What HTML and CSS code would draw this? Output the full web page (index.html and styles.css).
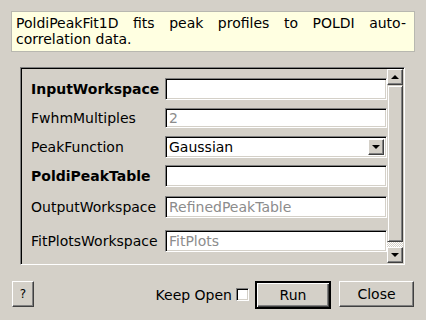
FILE: index.html
```html
<!DOCTYPE html>
<html>
<head>
<meta charset="utf-8">
<link rel="stylesheet" href="styles.css">
</head>
<body>
<div class="desc">PoldiPeakFit1D fits peak profiles to POLDI auto-correlation data.</div>
<div class="frame">
  <div class="content">
    <div class="row r1"><span class="label bold">InputWorkspace</span><div class="field"></div></div>
    <div class="row r2"><span class="label">FwhmMultiples</span><div class="field gray">2</div></div>
    <div class="row r3"><span class="label">PeakFunction</span><div class="field combo"><span class="ctext">Gaussian</span><span class="cbtn"><i class="tri-down"></i></span></div></div>
    <div class="row r4"><span class="label bold">PoldiPeakTable</span><div class="field"></div></div>
    <div class="row r5"><span class="label">OutputWorkspace</span><div class="field gray">RefinedPeakTable</div></div>
    <div class="row r6"><span class="label">FitPlotsWorkspace</span><div class="field gray">FitPlots</div></div>
  </div>
  <div class="sb">
    <div class="sb-btn"><i class="tri-up"></i></div>
    <div class="sb-handle"></div>
    <div class="sb-trough"></div>
    <div class="sb-btn"><i class="tri-down"></i></div>
  </div>
</div>
<div class="footer">
  <div class="btn help">?</div>
  <div class="spacer"></div>
  <span class="keep">Keep Open</span>
  <span class="check"></span>
  <div class="btn run">Run</div>
  <div class="btn close">Close</div>
</div>
</body>
</html>
```
FILE: styles.css
```css
html, body {
  margin: 0;
  padding: 0;
  background: #d4d0c8;
  font-family: "DejaVu Sans", sans-serif;
  font-size: 14px;
  color: #000;
}
body {
  width: 426px;
  height: 320px;
  overflow: hidden;
}
.desc {
  margin: 11px 11px 0 11px;
  height: 41px;
  box-sizing: border-box;
  border: 1px solid #b8b8b0;
  background: #ffffe1;
  padding: 3px 8px 0 4px;
  line-height: 16px;
  text-align: justify;
}
.frame {
  margin: 15px 0 0 20px;
  width: 385px;
  height: 198px;
  box-sizing: border-box;
  border: 1px solid;
  border-color: #808080 #ffffff #ffffff #808080;
  box-shadow: inset 1px 1px #000, inset -1px -1px #d4d0c8;
  padding: 1px;
  display: flex;
}
.content {
  flex: 1;
  overflow: hidden;
  padding: 9px 0 0 9px;
}
.row {
  display: flex;
  align-items: center;
  height: 22px;
}
.r2 { margin-top: 8px; height: 20px; }
.r3 { margin-top: 8px; }
.r4 { margin-top: 7px; }
.r5 { margin-top: 9px; }
.r6 { margin-top: 12px; }
.label {
  width: 134px;
  flex: none;
  white-space: nowrap;
}
.bold { font-weight: bold; }
.field {
  flex: 1;
  height: 100%;
  box-sizing: border-box;
  background: #fff;
  border: 1px solid;
  border-color: #808080 #ffffff #ffffff #808080;
  box-shadow: inset 1px 1px #000, inset -1px -1px #d4d0c8;
  padding: 0 0 0 3px;
  display: flex;
  align-items: center;
  white-space: nowrap;
}
.gray { color: #8c8c8c; }
.combo {
  padding: 2px 2px 2px 3px;
}
.ctext { flex: 1; }
.cbtn {
  width: 16px;
  height: 16px;
  box-sizing: border-box;
  background: #d4d0c8;
  border: 1px solid;
  border-color: #ffffff #404040 #404040 #ffffff;
  box-shadow: inset -1px -1px #808080;
  display: flex;
  align-items: center;
  justify-content: center;
}
.tri-down, .tri-up {
  display: block;
  width: 0;
  height: 0;
  border-left: 4px solid transparent;
  border-right: 4px solid transparent;
}
.tri-down { border-top: 4px solid #000; }
.tri-up { border-bottom: 4px solid #000; }
.sb {
  width: 16px;
  display: flex;
  flex-direction: column;
}
.sb-btn {
  height: 16px;
  flex: none;
  box-sizing: border-box;
  background: #d4d0c8;
  border: 1px solid;
  border-color: #ffffff #404040 #404040 #ffffff;
  box-shadow: inset -1px -1px #808080;
  display: flex;
  align-items: center;
  justify-content: center;
}
.sb-handle {
  flex: 1;
  box-sizing: border-box;
  background: #d4d0c8;
  border: 1px solid;
  border-color: #d4d0c8 #404040 #404040 #d4d0c8;
  box-shadow: inset 1px 1px #fff, inset -1px -1px #808080;
}
.sb-trough {
  height: 5px;
  flex: none;
  background-color: #d4d0c8;
  background-image: linear-gradient(45deg, #fff 25%, transparent 25%, transparent 75%, #fff 75%), linear-gradient(45deg, #fff 25%, transparent 25%, transparent 75%, #fff 75%);
  background-size: 2px 2px;
  background-position: 0 0, 1px 1px;
}
.footer {
  display: flex;
  align-items: flex-start;
  height: 28px;
  margin: 16px 12px 0 12px;
}
.spacer { flex: 1; }
.btn {
  box-sizing: border-box;
  height: 26px;
  background: #d4d0c8;
  border: 1px solid;
  border-color: #ffffff #404040 #404040 #ffffff;
  box-shadow: inset -1px -1px #808080;
  display: flex;
  align-items: center;
  justify-content: center;
}
.help { width: 22px; font-size: 12px; }
.keep { margin-right: 4px; align-self: center; }
.check {
  align-self: center;
  width: 13px;
  height: 13px;
  box-sizing: border-box;
  background: #fff;
  border: 1px solid;
  border-color: #808080 #ffffff #ffffff #808080;
  box-shadow: inset 1px 1px #000, inset -1px -1px #d4d0c8;
  margin-right: 6px;
  margin-top: -2px;
}
.run {
  width: 76px;
  height: 28px;
  border-width: 2px;
  border-color: #000;
  box-shadow: inset 1px 1px #fff, inset -1px -1px #404040, inset -2px -2px #808080;
}
.close { width: 75px; margin-left: 8px; }
```
